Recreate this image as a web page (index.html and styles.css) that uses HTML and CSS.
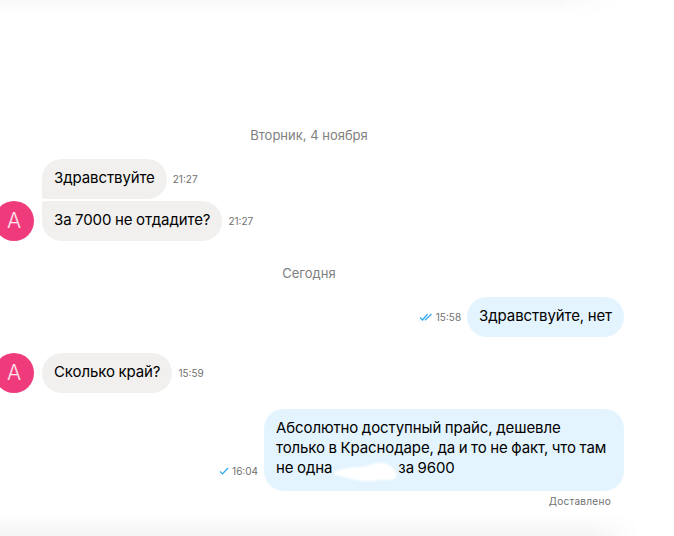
FILE: index.html
```html
<!DOCTYPE html>
<html lang="en">
<head>
  <meta charset="UTF-8">
  <title>Чат</title>
  <link rel="stylesheet" href="styles.css">
</head>
<body>
  <div class="shade-top"></div>
  <div class="chat">
    <div class="day day-first">Вторник, 4 ноября</div>

    <div class="row row-in">
      <div class="avatar avatar-empty"></div>
      <div class="bubble bubble-in bubble-first">Здравствуйте</div>
      <span class="time">21:27</span>
    </div>
    <div class="row row-in row-next">
      <div class="avatar">А</div>
      <div class="bubble bubble-in bubble-last">За 7000 не отдадите?</div>
      <span class="time">21:27</span>
    </div>

    <div class="day day-today">Сегодня</div>

    <div class="row row-out">
      <svg class="check" width="14" height="10" viewBox="0 0 14 10">
        <path d="M1 5.5L3.5 8L8.5 2M6 8.2L12.5 2" fill="none" stroke="#2fa8f0" stroke-width="1.2"/>
      </svg>
      <span class="time">15:58</span>
      <div class="bubble bubble-out">Здравствуйте, нет</div>
    </div>

    <div class="row row-in row-gap">
      <div class="avatar">А</div>
      <div class="bubble bubble-in">Сколько край?</div>
      <span class="time">15:59</span>
    </div>

    <div class="row row-out row-gap">
      <svg class="check" width="10" height="10" viewBox="0 0 10 10">
        <path d="M1 5.5L3.5 8L9 2" fill="none" stroke="#2fa8f0" stroke-width="1.2"/>
      </svg>
      <span class="time">16:04</span>
      <div class="bubble bubble-out bubble-long">
        Абсолютно доступный прайс, дешевле только в Краснодаре, да и то не факт, что там
        не одна<svg class="blur" width="66" height="24" viewBox="0 0 66 24"><path d="M2 12C10 8 20 7 30 7C38 6 44 2 51 3C58 4 62 8 64 13C65 18 62 21 56 20C48 19 42 22 34 21C24 21 12 17 2 14Z" fill="#fff"/></svg>за 9600
      </div>
    </div>
    <div class="status">Доставлено</div>
  </div>
  <div class="shade-bottom"></div>
</body>
</html>
```

FILE: styles.css
```css
body {
  margin: 0;
  width: 674px;
  height: 536px;
  overflow: hidden;
  position: relative;
  background-color: #fff;
  font-family: 'Inter', sans-serif;
  color: #000;
}

/* Shadows of the header and the input */
.shade-top {
  position: absolute;
  top: 0;
  left: 0;
  width: 620px;
  height: 16px;
  background: linear-gradient(#f9f9f9, #fff);
  -webkit-mask-image: linear-gradient(to right, #000 90%, transparent);
}

.shade-bottom {
  position: absolute;
  bottom: 0;
  left: 0;
  width: 640px;
  height: 22px;
  background: linear-gradient(#fff, #f4f4f4);
  -webkit-mask-image: linear-gradient(to right, #000 92%, transparent);
}

.chat {
  width: 630px;
  margin-left: -6px;
  padding-top: 127px;
}

.day {
  text-align: center;
  font-size: 13px;
  line-height: 16px;
  color: #808080;
}

.day-first {
  margin-bottom: 16px;
}

.day-today {
  margin: 24px 0 16px;
}

.row {
  display: flex;
  align-items: flex-end;
}

.row-next {
  margin-top: 2px;
}

.row-gap {
  margin-top: 16px;
}

.row-out {
  justify-content: flex-end;
}

.avatar {
  width: 40px;
  height: 40px;
  margin-right: 8px;
  border-radius: 50%;
  background-color: #ef3b7c;
  color: #fde6ee;
  font-size: 21px;
  font-weight: 300;
  line-height: 40px;
  text-align: center;
  flex-shrink: 0;
}

.avatar-empty {
  background: none;
}

.bubble {
  box-sizing: border-box;
  padding: 9px 12px 11px;
  border-radius: 20px;
  font-size: 15px;
  line-height: 20px;
  letter-spacing: -0.1px;
  word-spacing: -0.5px;
}

.bubble-in {
  background-color: #f1f0ee;
}

.bubble-first {
  border-bottom-left-radius: 2px;
}

.bubble-last {
  border-top-left-radius: 2px;
}

.bubble-out {
  background-color: #e3f4fe;
}

.bubble-long {
  width: 360px;
  padding-right: 16px;
}

.time {
  margin: 0 6px 14px;
  font-size: 10px;
  line-height: 12px;
  color: #707070;
}

.row-out .time {
  margin-left: 3px;
}

.check {
  flex-shrink: 0;
  margin-bottom: 15px;
}

.blur {
  margin: -4px 0;
  vertical-align: -7px;
  filter: blur(1px);
}

.status {
  margin: 4px 13px 0 0;
  text-align: right;
  font-size: 10px;
  line-height: 12px;
  letter-spacing: 0.3px;
  color: #707070;
}
```
